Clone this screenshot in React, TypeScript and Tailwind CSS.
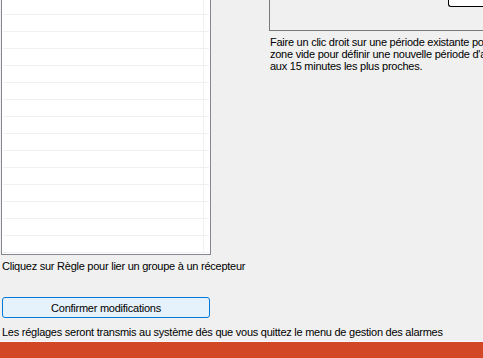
import React from "react";

export default function App() {
  const rows = Array.from({ length: 15 });
  return (
    <div className="w-[483px] h-[358px] bg-[#f0f0f0] overflow-hidden flex flex-col font-['Liberation_Sans',Arial,sans-serif] text-[11px] leading-[12px] tracking-[-0.25px] text-black">
      <div className="flex items-start h-[255px] shrink-0">
        <div className="ml-[1px] w-[210px] h-[255px] shrink-0 border-x border-b border-[#828790] bg-white overflow-hidden">
          <div className="mt-[-2px] px-[1px]">
            {rows.map((_, i) => (
              <div key={i} className="flex h-[17px] border-b border-[#f0f0f0]">
                <div className="w-[201px] h-full border-r border-[#f0f0f0]" />
              </div>
            ))}
          </div>
        </div>
        <div className="ml-[58px] w-[214px] shrink-0">
          <div className="h-[31px] border-l border-b border-[#7a7a7a] flex justify-end">
            <div className="w-[35px] h-[7px] bg-white border-l border-b border-black rounded-bl-[3px]" />
          </div>
          <div className="mt-[5px] ml-[1px] whitespace-nowrap">
            <div>Faire un clic droit sur une période existante pour la supprimer, ou</div>
            <div>zone vide pour définir une nouvelle période d'alarme. Les heures</div>
            <div>aux 15 minutes les plus proches.</div>
          </div>
        </div>
      </div>
      <div className="mt-[5px] ml-[2px] whitespace-nowrap">
        Cliquez sur Règle pour lier un groupe à un récepteur
      </div>
      <button className="mt-[25px] ml-[2px] w-[208px] h-[21px] shrink-0 bg-[#e5f1fb] border border-[#0078d7] rounded-[3px] text-center text-[11px] leading-[12px] tracking-[-0.25px] font-['Liberation_Sans',Arial,sans-serif]">
        Confirmer modifications
      </button>
      <div className="mt-[8px] ml-[2px] whitespace-nowrap">
        Les réglages seront transmis au système dès que vous quittez le menu de gestion des alarmes
      </div>
      <div className="mt-auto h-[1px] bg-[#f8f8f8] shrink-0" />
      <div className="h-[16px] bg-[#d24726] shrink-0" />
    </div>
  );
}
